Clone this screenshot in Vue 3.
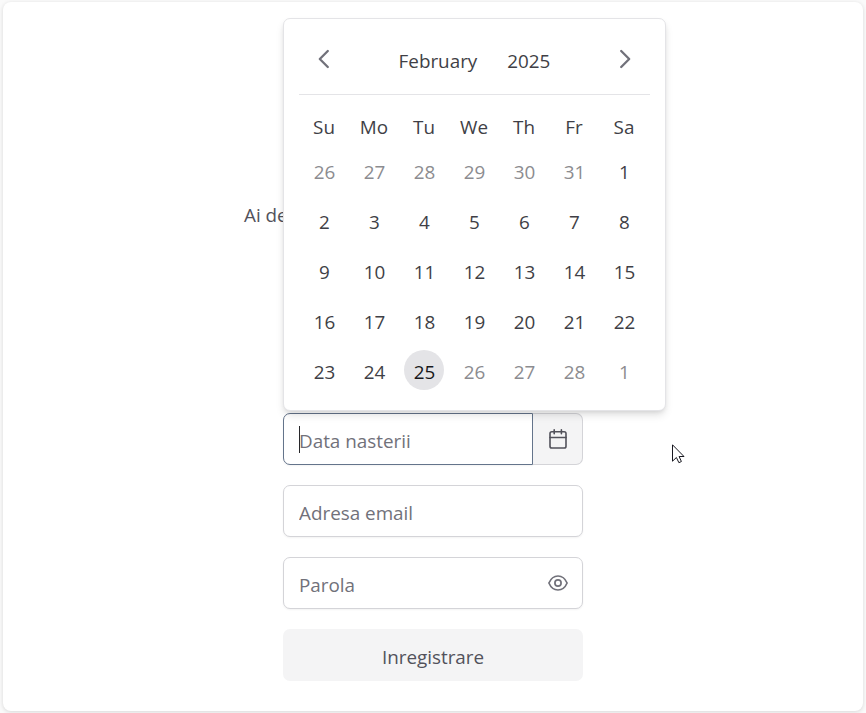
<script setup>
import { ref } from 'vue'

const weekdays = ['Su', 'Mo', 'Tu', 'We', 'Th', 'Fr', 'Sa']
const birthDate = ref('')
const email = ref('')
const password = ref('')

// January 26th 2025 is the first Sunday shown on the February page
const days = Array.from({ length: 35 }, (_, i) => {
  const date = new Date(2025, 0, 26 + i)
  const label = date.getDate()
  const february = date.getMonth() === 1
  return { label, muted: !february || label > 25, today: february && label === 25 }
})
</script>

<template>
  <main class="page">
    <section class="card">
      <p class="hint">Ai de</p>
      <form class="form" @submit.prevent>
        <div class="date-field">
          <div class="input focused">
            <span class="caret"></span>
            <input v-model="birthDate" placeholder="Data nasterii" />
          </div>
          <button type="button" class="date-button" aria-label="Calendar">
            <svg width="20" height="20" viewBox="0 0 20 20" fill="none" stroke="currentColor" stroke-width="1.6" stroke-linecap="round" stroke-linejoin="round">
              <rect x="2" y="2.7" width="16" height="16.3" rx="1.8" />
              <path d="M2 8.500h16M6.200.8v4M13.400.8v4" />
            </svg>
          </button>
          <div class="calendar">
            <header class="calendar-head">
              <button type="button" class="nav" aria-label="Previous">
                <svg width="20" height="20" viewBox="0 0 20 20"><path d="M13.800 2 5.800 10l8 8" /></svg>
              </button>
              <div class="title"><span>February</span><span>2025</span></div>
              <button type="button" class="nav" aria-label="Next">
                <svg width="20" height="20" viewBox="0 0 20 20"><path d="m6.200 2 8 8-8 8" /></svg>
              </button>
            </header>
            <div class="weekdays">
              <span v-for="day in weekdays" :key="day">{{ day }}</span>
            </div>
            <div class="days">
              <span v-for="(day, i) in days" :key="i" class="day" :class="{ muted: day.muted, today: day.today }">
                <span class="number">{{ day.label }}</span>
              </span>
            </div>
          </div>
        </div>
        <div class="input"><input v-model="email" placeholder="Adresa email" /></div>
        <div class="input">
          <input v-model="password" type="password" placeholder="Parola" />
          <svg class="eye" width="20" height="20" viewBox="0 0 20 20" fill="none" stroke="currentColor" stroke-width="1.700">
            <path d="M.9 10C2.800 5.600 6 3 10 3s7.200 2.600 9.100 7C17.200 14.400 14 17 10 17S2.800 14.400.9 10Z" />
            <circle cx="10" cy="10" r="3.100" />
          </svg>
        </div>
        <button class="submit">Inregistrare</button>
      </form>
      <svg class="pointer" width="13" height="20" viewBox="0 0 13 20">
        <path d="M.5.8v16.400l3.900-3.700 2.500 5.200 2.500-1.200-2.300-5h4.900Z" fill="#fff" stroke="#181820" stroke-width="1" />
      </svg>
    </section>
  </main>
</template>

<style>
body {
  margin: 0;
  background: #fafafa;
}
</style>

<style scoped>
* {
  box-sizing: border-box;
}
.page {
  height: 713px;
  padding: 2px 3px;
  overflow: hidden;
  font: 18.85px/26px "Open Sans", "Noto Sans", sans-serif;
  color: #3f3f46;
}
.card {
  position: relative;
  height: 709px;
  padding: 200px 280px 0;
  border-radius: 8px;
  background: #fff;
  box-shadow: 0 1px 4px rgba(0, 0, 0, 0.14);
}
.hint {
  margin: 0 0 0 -39px;
  color: #52525b;
}
button,
input {
  font: inherit;
  border: 0;
  padding: 0;
}
.form {
  display: flex;
  flex-direction: column;
  gap: 20px;
  width: 300px;
  margin-top: 185px;
}
.input {
  display: flex;
  align-items: center;
  height: 52px;
  padding: 3px 14px 0 15px;
  border: 1px solid #d4d4d8;
  border-radius: 7px;
  background: #fff;
  box-shadow: 0 1px 2px rgba(18, 18, 23, 0.05);
}
.input input {
  flex: 1;
  min-width: 0;
  background: transparent;
  outline: 0;
}
.input input::placeholder {
  color: #71717a;
  opacity: 1;
}
.eye {
  margin-top: -3px;
  color: #71717a;
}
.date-field {
  position: relative;
  display: flex;
}
.focused {
  width: 250px;
  border-color: #64748b;
  border-radius: 7px 0 0 7px;
}
.caret {
  width: 1px;
  height: 27px;
  margin-right: -1px;
  margin-top: -3px;
  background: #27272a;
}
.date-button {
  display: flex;
  align-items: center;
  justify-content: center;
  width: 50px;
  height: 52px;
  border: 1px solid #d4d4d8;
  border-left: 0;
  border-radius: 0 7px 7px 0;
  background: #f4f4f5;
  color: #52525b;
}
.calendar {
  position: absolute;
  bottom: 54px;
  left: 0;
  width: 383px;
  height: 393px;
  padding: 15px;
  border: 1px solid #e4e4e7;
  border-radius: 7px;
  background: #fff;
  box-shadow: 0 5px 8px -1px rgba(0, 0, 0, 0.12), 0 2px 5px -2px rgba(0, 0, 0, 0.12);
}
.calendar-head {
  display: flex;
  justify-content: space-between;
  height: 61px;
  padding: 5px 0 15px;
  border-bottom: 1px solid #e4e4e7;
}
.nav {
  display: flex;
  align-items: center;
  justify-content: center;
  width: 50px;
  height: 40px;
  background: transparent;
}
.nav path {
  fill: none;
  stroke: #71717a;
  stroke-width: 2.300;
  stroke-linecap: round;
  stroke-linejoin: round;
}
.title {
  display: flex;
  gap: 30px;
  padding-top: 9px;
}
.weekdays,
.days {
  display: grid;
  grid-template-columns: repeat(7, 50px);
  text-align: center;
}
.weekdays {
  padding: 19px 0 5px;
}
.day {
  display: flex;
  align-items: center;
  justify-content: center;
  height: 50px;
}
.number {
  width: 40px;
  height: 40px;
  padding-left: 1px;
  border-radius: 50%;
  line-height: 44px;
}
.muted {
  color: #8c8c90;
}
.today .number {
  background: #e4e4e7;
  color: #18181b;
}
.submit {
  height: 52px;
  padding-top: 3px;
  border-radius: 7px;
  background: #f4f4f5;
  color: #52525b;
}
.pointer {
  position: absolute;
  left: 669px;
  top: 442px;
}
</style>
